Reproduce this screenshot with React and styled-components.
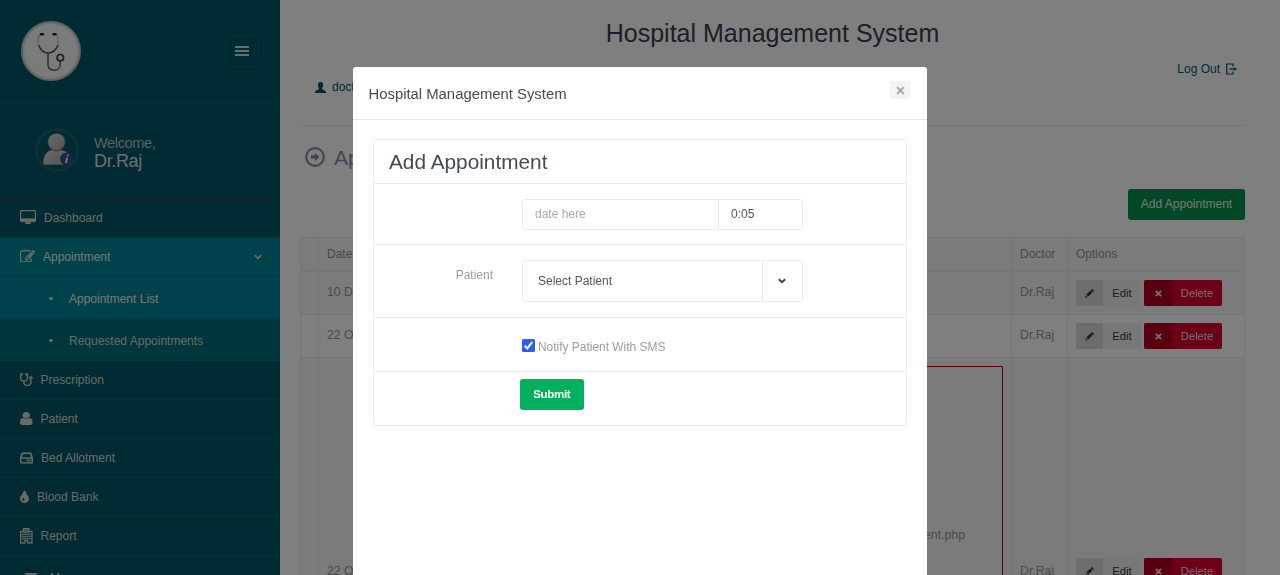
import React from "react";
import styled, { createGlobalStyle } from "styled-components";

const GlobalStyle = createGlobalStyle`
  *, *::before, *::after { box-sizing: border-box; }
  html, body { margin: 0; height: 575px; overflow: hidden; background: #fff; }
  body { font: 12px/17px "Liberation Sans", Arial, sans-serif; color: #949494; }
`;

const Page = styled.div`
  display: flex;
  width: 1280px;
  height: 575px;
  overflow: hidden;
`;

/* ---------- Sidebar ---------- */
const Sidebar = styled.aside`
  width: 280px;
  flex: none;
  height: 575px;
  overflow: hidden;
  background: #005766;
`;
const LogoBar = styled.div`
  display: flex;
  align-items: center;
  justify-content: space-between;
  height: 103px;
  padding: 0 21px;
  border-bottom: 1px solid #006b64;
`;
const LogoSvg = styled.svg`
  display: block;
  width: 60px;
  height: 60px;
`;
const MenuButton = styled.button`
  display: flex;
  flex-direction: column;
  align-items: center;
  justify-content: center;
  gap: 2px;
  width: 34px;
  height: 32px;
  padding: 0;
  background: transparent;
  border: 1px solid #006b64;
  border-radius: 3px;
`;
const MenuLine = styled.span`
  width: 14px;
  height: 2px;
  background: #d8dcc8;
`;
const Profile = styled.div`
  display: flex;
  align-items: center;
  gap: 15px;
  height: 96px;
  padding: 0 0 2px 35px;
  border-bottom: 1px solid #3a3f46;
`;
const Welcome = styled.div`
  display: flex;
  flex-direction: column;
  padding-top: 7px;
  color: #b9c4c4;
  font-size: 14.5px;
  line-height: 17px;
  letter-spacing: -0.35px;
`;
const UserName = styled.span`
  color: #dcdcdc;
  font-size: 18px;
  line-height: 19px;
`;
const NavItem = styled.div`
  display: flex;
  align-items: center;
  height: ${(p) => (p.$tall ? 45 : 39)}px;
  gap: ${(p) => (p.$tall ? 12 : 8)}px;
  padding: 0 18px 0 ${(p) => (p.$tall ? 24 : 20)}px;
  color: ${(p) => (p.$active ? "#eef0e8" : "#d3d6c6")};
  background: ${(p) => (p.$active ? "#008496" : "transparent")};
  border-bottom: 1px solid ${(p) => (p.$active ? "#00757c" : "#006b64")};
`;
const NavText = styled.span`
  flex: 1;
  padding-top: 1px;
  white-space: nowrap;
`;
const NavIcon = styled.svg`
  display: block;
  flex: none;
  width: ${(p) => p.$w}px;
  height: ${(p) => p.$h || 13}px;
  margin-bottom: ${(p) => p.$lift || 0}px;
  fill: #d3d6c6;
  stroke: #d3d6c6;
  stroke-width: ${(p) => p.$weight || 0};
`;
const SubItem = styled.div`
  display: flex;
  align-items: center;
  height: 42px;
  padding: 3px 0 0 49px;
  gap: 16px;
  color: ${(p) => (p.$active ? "#eef0e8" : "#d3d6c6")};
  background: ${(p) => (p.$active ? "#008496" : "#006d7b")};
  border-bottom: 1px solid #00757c;
`;
const Bullet = styled.span`
  width: 4px;
  height: 3px;
  margin-bottom: 2px;
  border-radius: 2px;
  background: #d3d6c6;
`;

/* ---------- Main content ---------- */
const Main = styled.main`
  flex: 1;
  height: 575px;
  padding: 0 35px 0 20px;
  overflow: hidden;
  background: #fff;
`;
const Title = styled.h1`
  margin: 0;
  padding-top: 18px;
  height: 60px;
  color: #37404f;
  font-size: 25px;
  line-height: 30px;
  font-weight: 400;
  text-align: center;
`;
const TopBar = styled.div`
  display: flex;
  justify-content: space-between;
  height: 66px;
  padding: 0 8px 0 15px;
  border-bottom: 1px solid #ececec;
  color: #005766;
`;
const Account = styled.div`
  display: flex;
  align-items: center;
  gap: 6px;
  padding-top: 18px;
  height: 36px;
`;
const LogOut = styled.div`
  display: flex;
  align-items: center;
  gap: 6px;
  height: 17px;
`;
const LogOutText = styled.span`
  padding-top: 2px;
`;
const InlineIcon = styled.svg`
  display: block;
  flex: none;
  width: ${(p) => p.$w}px;
  height: ${(p) => p.$h}px;
`;
const Heading = styled.h2`
  display: flex;
  align-items: center;
  gap: 9px;
  height: 62px;
  margin: 0 0 1px;
  padding-left: 5px;
  color: #818da2;
  font-size: 21px;
  font-weight: 400;
`;
const ActionBar = styled.div`
  display: flex;
  justify-content: flex-end;
  height: 48px;
`;
const AddButton = styled.button`
  width: 117px;
  height: 31px;
  padding: 0 0 1px;
  border: 0;
  border-radius: 3px;
  background: #00914c;
  color: #eee;
  font: inherit;
  white-space: nowrap;
`;
const Table = styled.div`
  border: 1px solid #ebebeb;
  border-bottom: 0;
`;
const Row = styled.div`
  display: grid;
  grid-template-columns: 18px 120px 573px 56px 1fr;
  height: ${(p) => p.$height}px;
  border-bottom: 1px solid #ebebeb;
  background: ${(p) => (p.$shaded ? "#f7f7f7" : "#fff")};
  font-size: ${(p) => (p.$head ? 12 : 12.3)}px;
  color: #949494;
`;
const Cell = styled.div`
  display: flex;
  align-items: ${(p) => (p.$low ? "flex-end" : "center")};
  min-width: 0;
  padding: ${(p) => p.$pad || "0 8px 2px"};
  border-right: ${(p) => (p.$last ? "0" : "1px solid #ebebeb")};
  white-space: nowrap;
`;
const ErrorBox = styled.div`
  align-self: stretch;
  flex: 1;
  padding: 160px 37px 0 0;
  border: 1px solid #c00000;
  text-align: right;
`;
const Options = styled.div`
  display: flex;
  gap: 3px;
`;
const OptionButton = styled.button`
  display: flex;
  align-items: stretch;
  height: 26px;
  padding: 0;
  overflow: hidden;
  border: 0;
  border-radius: 2px;
  width: ${(p) => (p.$danger ? 78 : 65)}px;
  background: ${(p) => (p.$danger ? "#d6002c" : "#f0f0f1")};
  color: ${(p) => (p.$danger ? "#e6dfe0" : "#303641")};
  font: 11.2px "Liberation Sans", Arial, sans-serif;
`;
const OptionIcon = styled.span`
  display: flex;
  align-items: center;
  justify-content: center;
  width: ${(p) => (p.$danger ? 28 : 27)}px;
  background: ${(p) => (p.$danger ? "#b30020" : "#dadada")};
`;
const OptionText = styled.span`
  flex: 1;
  align-self: center;
  text-align: center;
`;

/* ---------- Modal ---------- */
const Backdrop = styled.div`
  position: fixed;
  inset: 0;
  background: rgba(0, 0, 0, 0.5);
`;
const Dialog = styled.section`
  position: fixed;
  left: 352.5px;
  top: 67.3px;
  width: 574.9px;
  height: 540px;
  overflow: hidden;
  border-radius: 3px;
  background: #fff;
`;
const DialogHeader = styled.header`
  display: flex;
  justify-content: space-between;
  height: 52.7px;
  padding: 14px 16px 0 16px;
  border-bottom: 1px solid #e8e8e8;
`;
const DialogTitle = styled.h4`
  margin: 0;
  color: #444a58;
  font-size: 14.85px;
  line-height: 26px;
  font-weight: 400;
`;
const CloseButton = styled.button`
  display: flex;
  align-items: center;
  justify-content: center;
  width: 21px;
  height: 18px;
  padding: 0;
  border: 0;
  border-radius: 3px;
  background: #f3f3f3;
`;
const Panel = styled.div`
  width: 534px;
  height: 287px;
  margin: 19px 0 0 20.5px;
  border: 1px solid #ebebeb;
  border-radius: 3px;
  color: #9c9c9c;
`;
const PanelTitle = styled.h3`
  height: 44px;
  margin: 0;
  padding-left: 15px;
  border-bottom: 1px solid #ebebeb;
  color: #444a58;
  font-size: 20.8px;
  line-height: 44px;
  font-weight: 400;
`;
const FormRow = styled.div`
  display: grid;
  grid-template-columns: 119px 280.5px;
  column-gap: 29px;
  align-items: start;
  height: ${(p) => p.$height}px;
  padding-top: ${(p) => p.$top}px;
  border-bottom: ${(p) => (p.$last ? "0" : "1px solid #ebebeb")};
`;
const Label = styled.label`
  padding-top: 7px;
  text-align: right;
`;
const InputGroup = styled.div`
  display: grid;
  grid-template-columns: ${(p) => p.$columns};
  height: ${(p) => p.$height}px;
  border: 1px solid #ebebeb;
  border-radius: 3px;
`;
const Field = styled.div`
  display: flex;
  align-items: center;
  padding: 1px 0 0 ${(p) => p.$indent || 12}px;
  border-right: ${(p) => (p.$divider ? "1px solid #ebebeb" : "0")};
  color: ${(p) => (p.$placeholder ? "#a9a9a9" : "#555")};
`;
const CheckRow = styled.div`
  display: flex;
  gap: 3px;
`;
const NotifyText = styled.span`
  font-size: 11.95px;
`;
const SubmitButton = styled.button`
  justify-self: start;
  width: 63.5px;
  height: 31px;
  margin-left: -2px;
  padding: 0;
  border: 0;
  border-radius: 3px;
  background: #00b05c;
  color: #fff;
  font: bold 11.5px "Liberation Sans", Arial, sans-serif;
  letter-spacing: -0.3px;
`;

/* ---------- Drawings ---------- */
function Logo() {
  return (
    <LogoSvg viewBox="0 0 60 60" fill="none">
      <circle cx="30" cy="30" r="29" fill="#f7f7f7" stroke="#bfc2bf" strokeWidth="2" />
      <circle cx="30" cy="30" r="27.5" stroke="#e0e0de" strokeWidth="1.5" />
      <path d="M19 13.5c-2 1-2 4-2 10M35 13.5c2.500 1 2 4 2 10" stroke="#ccc" strokeWidth="1.5" />
      <path d="M17.500 24c2 5 5 8 9.500 8s8-3 10-8" stroke="#4a5060" strokeWidth="1.500" />
      <path d="M27 32v12c0 7 12 7 12.300-.5v-3" stroke="#5a6072" strokeWidth="1.500" />
      <circle cx="39.300" cy="36.700" r="3.200" stroke="#343d4d" strokeWidth="1.700" />
      <path d="M20 13.200h2M32.500 13.200h2" stroke="#222a3a" strokeWidth="2.600" strokeLinecap="round" />
    </LogoSvg>
  );
}

function Avatar() {
  return (
    <InlineIcon $w={44} $h={44} viewBox="0 0 44 44">
      <defs>
        <linearGradient id="skin" x1="0" y1="0" x2="1" y2="1">
          <stop offset="0" stopColor="#d8d8d8" />
          <stop offset="1" stopColor="#a2a2a2" />
        </linearGradient>
      </defs>
      <circle cx="22" cy="22" r="20.5" fill="none" stroke="#136472" strokeWidth="3" />
      <path d="M8 35c0-8 4-14 13.500-14S36 27 36 35q0 2-2 2H10q-2 0-2-2z" fill="url(#skin)" stroke="#3e4d50" strokeWidth=".6" />
      <circle cx="21.500" cy="14" r="8.800" fill="url(#skin)" stroke="#50595b" strokeWidth=".8" />
      <circle cx="31.500" cy="31" r="6.300" fill="#34488c" />
      <path d="M32.700 26.500v1.700M32.200 29.500l-1.300 5.500" stroke="#e8e8ee" strokeWidth="2" />
    </InlineIcon>
  );
}

const DESKTOP =
  "M1728 992v-832q0-13-9.5-22.5t-22.5-9.5h-1600q-13 0-22.5 9.5t-9.5 22.5v832q0 13 9.5 22.5t22.5 9.5h1600q13 0 22.5-9.5t9.5-22.5zm128-832v1088q0 66-47 113t-113 47h-544q0 37 16 77.5t32 71 16 43.5q0 26-19 45t-45 19h-512q-26 0-45-19t-19-45q0-14 16-44t32-70 16-78h-544q-66 0-113-47t-47-113v-1088q0-66 47-113t113-47h1600q66 0 113 47t47 113z";
const EDIT =
  "M888 1184l116-116-152-152-116 116v56h96v96h56zm440-720q-16-16-33 1l-350 350q-17 17-1 33t33-1l350-350q17-17 1-33zm80 594v190q0 119-84.5 203.5t-203.5 84.5h-832q-119 0-203.5-84.5t-84.5-203.5v-832q0-119 84.5-203.5t203.5-84.5h832q63 0 117 25 15 7 18 23 3 17-9 29l-49 49q-14 14-32 8-23-6-45-6h-832q-66 0-113 47t-47 113v832q0 66 47 113t113 47h832q66 0 113-47t47-113v-126q0-13 9-22l64-64q15-15 35-7t20 29zm-96-738l288 288-672 672h-288v-288zm444 132l-92 92-288-288 92-92q28-28 68-28t68 28l152 152q28 28 28 68t-28 68z";
const STETHOSCOPE =
  "M1344 704q0-26-19-45t-45-19-45 19-19 45 19 45 45 19 45-19 19-45zm128 0q0 62-35.5 111t-92.5 70v395q0 159-131.5 271.5t-316.5 112.5-316.5-112.5-131.5-271.5v-132q-164-20-274-128t-110-252v-512q0-26 19-45t45-19q6 0 16 2 17-30 47-48t65-18q53 0 90.5 37.5t37.5 90.5-37.5 90.5-90.5 37.5q-33 0-64-18v402q0 106 94 181t226 75 226-75 94-181v-402q-31 18-64 18-53 0-90.5-37.5t-37.5-90.5 37.5-90.5 90.5-37.5q35 0 65 18t47 48q10-2 16-2 26 0 45 19t19 45v512q0 144-110 252t-274 128v132q0 106 94 181t226 75 226-75 94-181v-395q-57-21-92.5-70t-35.5-111q0-80 56-136t136-56 136 56 56 136z";
const USER =
  "M1536 1399q0 109-62.5 187t-150.5 78h-854q-88 0-150.5-78t-62.5-187q0-85 8.5-160.5t31.5-152 58.5-131 94-89 134.5-34.5q131 128 313 128t313-128q76 0 134.5 34.5t94 89 58.5 131 31.5 152 8.5 160.5zm-256-887q0 159-112.5 271.5t-271.5 112.5-271.5-112.5-112.5-271.5 112.5-271.5 271.5-112.5 271.5 112.5 112.5 271.5z";
const TINT =
  "M896 1152q0-36-20-69-1-1-15.5-22.5t-25.5-38-25-44-21-50.5q-4-16-21-16t-21 16q-7 23-21 50.5t-25 44-25.5 38-15.5 22.5q-20 33-20 69 0 53 37.5 90.5t90.5 37.5 90.5-37.5 37.5-90.5zm512-128q0 212-150 362t-362 150-362-150-150-362q0-145 81-275 6-9 62.5-90.5t101-151 99.5-178 83-201.5q9-30 34-47t51-17 51.5 17 33.5 47q28 93 83 201.5t99.5 178 101 151 62.5 90.5q81 127 81 275z";

function HospitalIcon() {
  return (
    <NavIcon $w={12.5} $h={15.5} $weight={0.25} viewBox="0 0 13 16" preserveAspectRatio="none">
      <path
        fillRule="evenodd"
        d="M0 3h3V1q0-1 1-1h5q1 0 1 1v2h3v13H7.500v-2.500h-2V16H0zM1.200 4.200v10.500h3.100V12.500h4.400v2.200h3.100V4.200H10V5H3v-.8zM4.500 1.200v2.600h4V1.200z"
      />
      <path d="M5.200 1.500h.8v.7h1v-.7h.8v2H7v-.7H6v.7h-.8zM2.200 6h1.700v1.200H2.200zM4.500 6h1.700v1.200H4.500zM6.800 6h1.700v1.200H6.800zM9.100 6h1.700v1.200H9.100zM2.200 8.200h1.700v1.200H2.200zM4.500 8.200h1.700v1.200H4.500zM6.800 8.200h1.700v1.200H6.800zM9.100 8.200h1.700v1.200H9.100zM2.200 10.300h1.700v1.200H2.200zM4.500 10.300h1.700v1.200H4.500zM6.800 10.300h1.700v1.200H6.800zM9.100 10.300h1.700v1.200H9.100z" />
    </NavIcon>
  );
}

function DriveIcon() {
  return (
    <NavIcon $w={13} $h={12} $weight={0.25} viewBox="0 0 13 12">
      <path fillRule="evenodd" d="M2.600.5h7.800q.8 0 1.100.8L13 6v4q0 1.500-1.500 1.500h-10Q0 11.500 0 10V6l1.500-4.700q.3-.8 1.100-.8zM3 1.900L1.900 5.500h9.200L10 1.900zM1.300 6.800v2.900q0 .5.500.5h9.400q.5 0 .5-.5V6.800z" />
      <path d="M6.800 7.700h1.500v1.500H6.800zM9.200 7.700h1.500v1.500H9.200z" />
    </NavIcon>
  );
}

function Cross({ size, color, width }) {
  return (
    <InlineIcon $w={size} $h={size} viewBox="0 0 8 8">
      <path d="M1 1l6 6M7 1L1 7" stroke={color} strokeWidth={width} fill="none" />
    </InlineIcon>
  );
}

function Chevron({ color, width }) {
  return (
    <InlineIcon $w={8} $h={6} viewBox="0 0 8 6">
      <path d="M.8 1.200L4 4.300l3.200-3.100" stroke={color} strokeWidth={width} fill="none" />
    </InlineIcon>
  );
}

function RowOptions() {
  return (
    <Options>
      <OptionButton>
        <OptionIcon>
          <InlineIcon $w={9} $h={9} viewBox="0 0 9 9">
            <path d="M.3 8.700l.5-2.500 1.900 1.900zM1.300 5.600l4-4 2 2-4 4zM5.800 1.100l.9-.8q.4-.4.8 0L8.700 1.500q.4.400 0 .8l-.9.9z" fill="#303641" />
          </InlineIcon>
        </OptionIcon>
        <OptionText>Edit</OptionText>
      </OptionButton>
      <OptionButton $danger>
        <OptionIcon $danger>
          <Cross size={7} color="#e6dfe0" width={2.3} />
        </OptionIcon>
        <OptionText>Delete</OptionText>
      </OptionButton>
    </Options>
  );
}

export default function App() {
  return (
    <>
      <GlobalStyle />
      <Page>
        <Sidebar>
          <LogoBar>
            <Logo />
            <MenuButton aria-label="Menu">
              <MenuLine />
              <MenuLine />
              <MenuLine />
            </MenuButton>
          </LogoBar>
          <Profile>
            <Avatar />
            <Welcome>
              Welcome,
              <UserName>Dr.Raj</UserName>
            </Welcome>
          </Profile>
          <NavItem>
            <NavIcon $w={16} $h={14} $lift={2} $weight={50} viewBox="-64 0 1920 1664" preserveAspectRatio="none"><path d={DESKTOP} /></NavIcon>
            <NavText>Dashboard</NavText>
          </NavItem>
          <NavItem $active>
            <NavIcon $w={15} $h={12.5} $lift={2} $weight={40} viewBox="0 128 1792 1408" preserveAspectRatio="none"><path d={EDIT} /></NavIcon>
            <NavText>Appointment</NavText>
            <Chevron color="#d3d6c6" width={1.7} />
          </NavItem>
          <SubItem $active><Bullet />Appointment List</SubItem>
          <SubItem><Bullet />Requested Appointments</SubItem>
          <NavItem>
            <NavIcon $w={12.5} $lift={1} $weight={40} viewBox="64 128 1408 1536" preserveAspectRatio="none"><path d={STETHOSCOPE} /></NavIcon>
            <NavText>Prescription</NavText>
          </NavItem>
          <NavItem>
            <NavIcon $w={12.5} $lift={1} viewBox="256 128 1280 1536" preserveAspectRatio="none"><path d={USER} /></NavIcon>
            <NavText>Patient</NavText>
          </NavItem>
          <NavItem>
            <DriveIcon />
            <NavText>Bed Allotment</NavText>
          </NavItem>
          <NavItem>
            <NavIcon $w={9} $lift={2} viewBox="384 0 1024 1536" preserveAspectRatio="none"><path d={TINT} /></NavIcon>
            <NavText>Blood Bank</NavText>
          </NavItem>
          <NavItem>
            <HospitalIcon />
            <NavText>Report</NavText>
          </NavItem>
          <NavItem $tall>
            <NavIcon $w={14} $h={10} viewBox="0 0 14 10">
              <path d="M0 0h14L7 6zM0 1.500l7 5.500 7-5.500V10H0z" />
            </NavIcon>
            <NavText>Message</NavText>
          </NavItem>
        </Sidebar>

        <Main>
          <Title>Hospital Management System</Title>
          <TopBar>
            <Account>
              <InlineIcon $w={11} $h={11} viewBox="0 0 11 11" fill="#005766">
                <path d="M5.500 0C7.500 0 8.300 1.400 8.100 3.200 8 5 7.200 5.700 7 6.600c0 .7.600 1 1.800 1.500C10.500 8.800 11 9.200 11 11H0c0-1.800.5-2.200 2.200-2.900C3.400 7.600 4 7.300 4 6.600 3.800 5.700 3 5 2.900 3.200 2.700 1.400 3.500 0 5.500 0z" />
              </InlineIcon>
              doctor
            </Account>
            <LogOut>
              <LogOutText>Log Out</LogOutText>
              <InlineIcon $w={11} $h={12} viewBox="0 0 11 12" fill="none" stroke="#005766">
                <path d="M7 3.500V1H.7v10H7V8.500" strokeWidth="1.200" />
                <path d="M3.500 6H9" strokeWidth="1.400" />
                <path d="M8.500 4L11 6 8.500 8z" fill="#005766" stroke="none" />
              </InlineIcon>
            </LogOut>
          </TopBar>
          <Heading>
            <InlineIcon $w={20} $h={20} viewBox="0 0 20 20" fill="none">
              <circle cx="10" cy="10" r="8.800" stroke="#818da2" strokeWidth="2.200" />
              <path d="M6 8.200h4V5.700l4.500 4.300-4.500 4.300v-2.500H6z" fill="#818da2" />
            </InlineIcon>
            Appointment
          </Heading>
          <ActionBar>
            <AddButton>Add Appointment</AddButton>
          </ActionBar>
          <Table>
            <Row $head $shaded $height={34}>
              <Cell />
              <Cell $pad="0 8px">Date</Cell>
              <Cell />
              <Cell $pad="0 8px">Doctor</Cell>
              <Cell $last $pad="0 8px">Options</Cell>
            </Row>
            {["10 Dec, 2020", "22 Oct, 2020"].map((date, i) => (
              <Row key={date} $shaded={i === 0} $height={43}>
                <Cell />
                <Cell>{date}</Cell>
                <Cell />
                <Cell>Dr.Raj</Cell>
                <Cell $last $pad="0 8px">
                  <RowOptions />
                </Cell>
              </Row>
            ))}
            <Row $shaded $height={236}>
              <Cell />
              <Cell $low $pad="0 8px 13px">22 Oct, 2020</Cell>
              <Cell $pad="8px">
                <ErrorBox>appointment.php</ErrorBox>
              </Cell>
              <Cell $low $pad="0 8px 13px">Dr.Raj</Cell>
              <Cell $last $low $pad="0 8px 9px">
                <RowOptions />
              </Cell>
            </Row>
          </Table>
        </Main>
      </Page>

      <Backdrop />
      <Dialog role="dialog">
        <DialogHeader>
          <DialogTitle>Hospital Management System</DialogTitle>
          <CloseButton aria-label="Close">
            <Cross size={9} color="#a3a3a3" width={1.6} />
          </CloseButton>
        </DialogHeader>
        <Panel>
          <PanelTitle>Add Appointment</PanelTitle>
          <FormRow $height={61} $top={15}>
            <Label />
            <InputGroup $height={31} $columns="196px 1fr">
              <Field $divider $placeholder>date here</Field>
              <Field>0:05</Field>
            </InputGroup>
          </FormRow>
          <FormRow $height={73} $top={15}>
            <Label>Patient</Label>
            <InputGroup $height={42} $columns="240px 1fr">
              <Field $divider $indent={15}>Select Patient</Field>
              <Field $indent={15}>
                <Chevron color="#3c4352" width={1.9} />
              </Field>
            </InputGroup>
          </FormRow>
          <FormRow $height={54} $top={21}>
            <Label />
            <CheckRow>
              <InlineIcon $w={13} $h={13} viewBox="0 0 13 13">
                <rect width="13" height="13" rx="1.500" fill="#315bff" />
                <path d="M2.700 6.800l2.500 2.600L10.300 3" stroke="#fff" strokeWidth="2" fill="none" />
              </InlineIcon>
              <NotifyText>Notify Patient With SMS</NotifyText>
            </CheckRow>
          </FormRow>
          <FormRow $last $height={53} $top={7}>
            <Label />
            <SubmitButton>Submit</SubmitButton>
          </FormRow>
        </Panel>
      </Dialog>
    </>
  );
}
